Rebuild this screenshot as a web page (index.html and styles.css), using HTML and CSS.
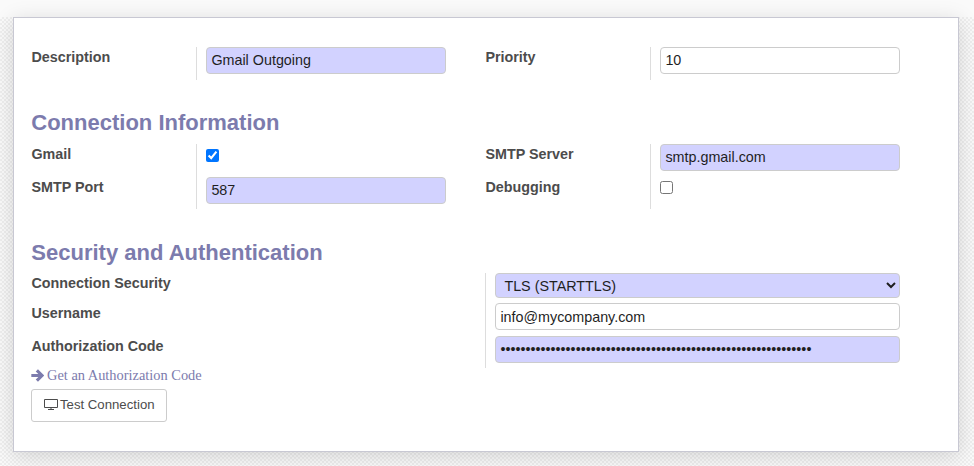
FILE: index.html
```html
<!DOCTYPE html>
<html lang="en">
<head>
<meta charset="utf-8">
<title>Outgoing Mail Server</title>
<link rel="stylesheet" href="styles.css">
</head>
<body>
<main class="view">
  <form class="sheet">
    <section class="group intro">
      <div class="column">
        <div class="row"><label for="name">Description</label><div class="value"><input id="name" class="field required" type="text" value="Gmail Outgoing"></div></div>
      </div>
      <div class="column">
        <div class="row"><label for="priority">Priority</label><div class="value"><input id="priority" class="field raised" type="text" value="10"></div></div>
      </div>
    </section>

    <h2>Connection Information</h2>
    <section class="group connection">
      <div class="column">
        <div class="row"><label for="gmail">Gmail</label><div class="value"><input id="gmail" class="check" type="checkbox" checked></div></div>
        <div class="row last"><label for="port">SMTP Port</label><div class="value"><input id="port" class="field required" type="text" value="587"></div></div>
      </div>
      <div class="column">
        <div class="row"><label for="host">SMTP Server</label><div class="value"><input id="host" class="field required" type="text" value="smtp.gmail.com"></div></div>
        <div class="row last"><label for="debug">Debugging</label><div class="value"><input id="debug" class="check raised" type="checkbox"></div></div>
      </div>
    </section>

    <h2 class="lower">Security and Authentication</h2>
    <section class="security">
      <div class="row select-row"><label for="encryption">Connection Security</label><div class="value"><select id="encryption" class="field required"><option>TLS (STARTTLS)</option></select></div></div>
      <div class="row"><label for="user">Username</label><div class="value"><input id="user" class="field" type="text" value="info@mycompany.com"></div></div>
      <div class="row last"><label for="code">Authorization Code</label><div class="value"><input id="code" class="field required" type="password" value="12345678901234567890123456789012345678901234567890123456789012"></div></div>
    </section>

    <a class="auth-link"><svg class="arrow" viewBox="0 0 12 12"><path d="M0.3 6H10M5.4 1.2L10.2 6L5.4 10.8"/></svg>Get an Authorization Code</a>
    <button class="test" type="button"><svg class="monitor" viewBox="0 0 16 12"><path d="M1.5 1.5h13v8h-13zM8 9.5v2M5 11.5h6"/></svg>Test Connection</button>
  </form>
</main>
</body>
</html>
```
FILE: styles.css
```css
* { box-sizing: border-box; }
body {
  margin: 0;
  height: 466px;
  overflow: hidden;
  font-family: "Liberation Sans", Arial, sans-serif;
  font-size: 14.34px;
  color: #4c4c4c;
  background: linear-gradient(#fafafa, #fafafa) 0 0 / 100% 17px no-repeat,
    conic-gradient(#eeeeee 25%, #fafafa 0 50%, #eeeeee 0 75%, #fafafa 0) 0 1px / 4px 4px;
}
.view { padding: 17px 15px 0 13px; }
.sheet {
  height: 435px;
  padding: 29px 58px 0 17px;
  background: #fff;
  border: 1px solid #c8c8d3;
  box-shadow: 0 4px 20px rgba(0, 0, 0, 0.15);
}
.group { display: grid; grid-template-columns: 454px 415px; }
.intro { height: 33px; }
.connection { height: 65px; }
.column:first-child { width: 415px; }
.row { display: flex; height: 33px; }
.row.last { height: 32px; }
label { width: 165px; padding: 2px 0 0 0.4px; line-height: 17px; font-weight: bold; }
.value { flex: 1; padding-left: 9px; border-left: 1px solid #ddd; }
.field {
  display: block;
  width: 100%;
  height: 27px;
  margin: 0;
  padding: 0 4px 0 4.4px;
  font: inherit;
  color: #1f1f1f;
  background: #fff;
  border: 1px solid #ccc;
  border-radius: 4px;
}
.field.required { background-color: #d2d2ff; }
input.field.required, .field.raised { padding-bottom: 2px; }
.check { display: block; width: 13px; height: 13px; margin: 5px 0 0; }
.check.raised { margin-top: 4px; }
h2 {
  margin: 30px 0 9px;
  padding-left: 0.3px;
  height: 25px;
  line-height: 25px;
  font-size: 22px;
  color: #7c7bad;
}
h2.lower { margin: 31px 0 8px; }
.security { height: 95px; }
.security label { width: 454px; }
.security .select-row { height: 30px; }
select.field { height: 25px; }
.auth-link {
  display: flex;
  align-items: center;
  height: 15px;
  font: 14.4px/15px "Liberation Serif", serif;
  color: #7c7bad;
}
.arrow { width: 13px; height: 13px; margin: -1px 3px 0 0; fill: none; stroke: currentColor; stroke-width: 2.9; }
.test {
  display: flex;
  align-items: center;
  width: 136px;
  height: 33px;
  margin-top: 6px;
  padding: 0 0 2px 12px;
  font: 13.2px "Liberation Sans", Arial, sans-serif;
  color: #4c4c4c;
  background: #fff;
  border: 1px solid #ccc;
  border-radius: 3px;
}
.monitor { width: 16px; height: 12px; margin: -1px 1px 0 -1px; fill: none; stroke: currentColor; stroke-width: 1; }
```
